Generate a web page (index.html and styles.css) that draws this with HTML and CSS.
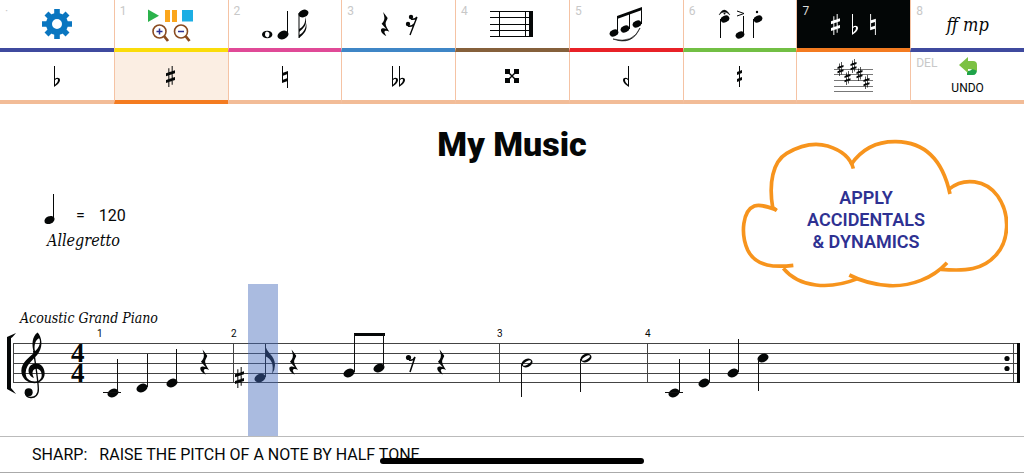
FILE: index.html
```html
<!DOCTYPE html>
<html lang="en">
<head>
    <meta charset="UTF-8">
    <meta name="viewport" content="width=device-width, initial-scale=1.0">
    <title>My Music</title>
    <link rel="stylesheet" href="styles.css">
</head>
<body>

<!-- shared music symbols -->
<svg class="symbols" aria-hidden="true">
    <symbol id="head" viewBox="0 0 12 10"><ellipse cx="6" cy="5" rx="5.7" ry="4.1" transform="rotate(-24 6 5)" /></symbol>
    <symbol id="half" viewBox="0 0 12 10"><path fill-rule="evenodd" transform="rotate(-24 6 5)" d="M0.3 5a5.7 4.1 0 1 0 11.4 0a5.7 4.1 0 1 0 -11.4 0zM1.5 5.4a4.5 1.7 -6 1 0 9 -.8a4.5 1.7 -6 1 0 -9 .8z" /></symbol>
    <symbol id="sharp" viewBox="0 0 27 63"><path d="M7 7h3v56h-3zM17 0h3v56h-3zM0 22L27 13V22L0 31zM0 42L27 33V42L0 51z" /></symbol>
    <symbol id="flat" viewBox="0 0 18 63"><path fill-rule="evenodd" d="M0 0H3V38C8 33 18 34 18 42C18 51 8 57 0 63zM3 43V56C8 52 12 47 12 42C12 37 6 38 3 43z" /></symbol>
    <symbol id="natural" viewBox="0 0 18 66"><path d="M0 0H3V20L18 15V66H15V46L0 51zM3 29V41L15 37V25z" fill-rule="evenodd" /></symbol>
    <symbol id="rest" viewBox="0 0 28 78"><path d="M8 0L22 19C24 22 16 31 16 38C16 46 22 53 28 64C20 59 11 60 12 66C13 70 16 74 18 78C8 74 0 66 1 58C2 52 11 52 18 55L3 38C11 30 14 22 11 12z" /></symbol>
    <symbol id="clef" viewBox="0 0 72 200">
        <path fill-rule="evenodd" d="M39 62C31 40 33 12 50 1C63 16 65 40 55 58C48 76 15 92 14 122C14 140 26 148 42 148C56 148 63 138 62 127C61 114 52 110 46 110C36 110 30 122 39 137C18 132 15 96 44 94C61 93 71 108 71 124C71 142 56 153 40 153C18 153 1 138 1 116C1 90 26 76 39 62zM42 57C55 46 61 28 54 18C44 22 38 38 42 57z" />
        <path d="M38 56C42 90 51 140 52 170C53 188 42 197 29 196C20 195 14 190 13 182" fill="none" stroke="currentColor" stroke-width="4" />
        <circle cx="23" cy="180" r="12" />
    </symbol>
</svg>

<nav class="toolbar">
    <button class="tool settings" aria-label="Settings">
        <span class="key">·</span>
        <svg class="icon" viewBox="0 0 112 48">
            <circle cx="56" cy="24" r="8" fill="none" stroke="#0a76c0" stroke-width="6" />
            <path d="M56 9V15M56 33V39M41 24H47M65 24H71M45.5 13.5L50 18M62 30L66.5 34.5M66.5 13.5L62 18M50 30L45.5 34.5" fill="none" stroke="#0a76c0" stroke-width="5.6" />
        </svg>
    </button>
    <button class="tool playback" aria-label="Playback and zoom">
        <span class="key">1</span>
        <svg class="icon" viewBox="0 0 112 48">
            <path d="M33 9.5V22L44 15.8z" fill="#2bb24c" />
            <path d="M50 10h5v12h-5zM57 10h5v12h-5z" fill="#fba61c" />
            <path d="M67 10h11v11.5h-11z" fill="#1caee4" />
            <g fill="none" stroke="#8a4b20">
                <circle cx="44.5" cy="31.5" r="6.5" stroke-width="1.6" />
                <circle cx="66" cy="31.5" r="6.5" stroke-width="1.6" />
                <path d="M49 36L53 41M70.5 36L74.5 41" stroke-width="2.8" />
            </g>
            <path d="M41.5 31.5h6M44.5 28.5v6M63 31.5h6" stroke="#2e3192" stroke-width="1.5" />
        </svg>
    </button>
    <button class="tool notes" aria-label="Notes">
        <span class="key">2</span>
        <svg class="icon" viewBox="0 0 112 48">
            <path fill-rule="evenodd" d="M33 34.5a5.2 3.8 0 1 0 10.4 0a5.2 3.8 0 1 0 -10.4 0zM36 34a2.2 2.8 0 1 1 4.4 1a2.2 2.8 0 1 1 -4.4 -1z" />
            <use href="#head" x="48" y="30" width="12" height="10" /><path d="M58 11h1v22h-1z" />
            <use href="#head" x="69" y="9" width="11" height="9" /><path d="M69.5 13h1v25h-1z" />
            <path d="M70 29C74 27 77 23 76 17C79 24 75 28 70 32zM70 35C74 33 77 29 77 23C79 30 75 34 70 38z" />
        </svg>
    </button>
    <button class="tool rests" aria-label="Rests">
        <span class="key">3</span>
        <svg class="icon" viewBox="0 0 112 48">
            <use href="#rest" x="37" y="12" width="10" height="24" />
            <circle cx="68" cy="17" r="2.2" /><circle cx="65" cy="24" r="2.2" />
            <path d="M74 17L67 35M68 19Q72 20 74 17M65 26Q69 27 71 24" fill="none" stroke="currentColor" stroke-width="1.4" />
        </svg>
    </button>
    <button class="tool staves" aria-label="Staves and bar lines">
        <span class="key">4</span>
        <svg class="icon" viewBox="0 0 112 48">
            <path d="M34 11h43v1h-43zM34 17h43v1h-43zM34 24h43v1h-43zM34 30h43v1h-43zM34 36h43v1h-43zM43 11h1v26h-1zM69 11h1v26h-1zM73 11h4v26h-4z" />
        </svg>
    </button>
    <button class="tool groups" aria-label="Beams and slurs">
        <span class="key">5</span>
        <svg class="icon" viewBox="0 0 112 48">
            <use href="#head" x="39" y="29" width="10" height="8" /><use href="#head" x="50" y="25" width="10" height="8" /><use href="#head" x="62" y="20" width="10" height="8" />
            <path d="M47 16h1v17h-1zM59 12h1v17h-1zM71 8h1v16h-1zM47 16L72 7V10L47 19z" />
            <path d="M43 39Q62 46 70 28Q63 44 43 39z" stroke="currentColor" stroke-width=".6" />
        </svg>
    </button>
    <button class="tool marks" aria-label="Articulations">
        <span class="key">6</span>
        <svg class="icon" viewBox="0 0 112 48">
            <use href="#head" x="36" y="15" width="10" height="8" /><path d="M36 19h1v19h-1z" />
            <use href="#head" x="51" y="31" width="10" height="8" /><path d="M59 16h1v19h-1z" />
            <use href="#head" x="69" y="15" width="10" height="8" /><path d="M69 19h1v19h-1z" />
            <path d="M35 15Q40 5 46 15Q40 9 35 15z" stroke="currentColor" stroke-width=".4" /><circle cx="40.5" cy="13.5" r="1" /><circle cx="73" cy="12" r="1.2" />
            <path d="M53 11L60 13.5L53 16" fill="none" stroke="currentColor" />
        </svg>
    </button>
    <button class="tool accidentals" aria-label="Accidentals">
        <span class="key">7</span>
        <svg class="icon" viewBox="0 0 112 48">
            <use href="#sharp" x="33" y="14" width="9" height="21" />
            <use href="#flat" x="54" y="14" width="6" height="21" />
            <use href="#natural" x="72" y="14" width="6" height="21" />
        </svg>
    </button>
    <button class="tool dynamics">
        <span class="key">8</span>
        <span class="marking">ff mp</span>
    </button>

    <button class="tool" aria-label="Flat">
        <svg class="icon" viewBox="0 0 112 48"><use href="#flat" x="53" y="14" width="6" height="21" /></svg>
    </button>
    <button class="tool selected" aria-label="Sharp">
        <svg class="icon" viewBox="0 0 112 48"><use href="#sharp" x="51" y="14" width="9" height="21" /></svg>
    </button>
    <button class="tool" aria-label="Natural">
        <svg class="icon" viewBox="0 0 112 48"><use href="#natural" x="53" y="14" width="6" height="22" /></svg>
    </button>
    <button class="tool" aria-label="Double flat">
        <svg class="icon" viewBox="0 0 112 48"><use href="#flat" x="49" y="14" width="6" height="21" /><use href="#flat" x="56" y="14" width="6" height="21" /></svg>
    </button>
    <button class="tool" aria-label="Double sharp">
        <svg class="icon" viewBox="0 0 112 48">
            <path d="M49 17h5v5h-5zM58 17h5v5h-5zM49 26h5v5h-5zM58 26h5v5h-5z" />
            <path d="M52 20L60 28M60 20L52 28" stroke="currentColor" stroke-width="1.4" />
        </svg>
    </button>
    <button class="tool" aria-label="Half flat">
        <svg class="icon" viewBox="0 0 112 48"><use href="#flat" x="53" y="14" width="6" height="21" transform="matrix(-1 0 0 1 112 0)" /></svg>
    </button>
    <button class="tool" aria-label="Half sharp">
        <svg class="icon" viewBox="0 0 112 48"><path d="M55 14h1v21h-1zM53 20L58 18V21L53 23zM53 27L58 25V28L53 30z" /></svg>
    </button>
    <button class="tool" aria-label="Key signature">
        <svg class="icon" viewBox="0 0 112 48">
            <path d="M36 17h39v1h-39zM36 22h39v1h-39zM36 28h39v1h-39zM36 34h39v1h-39zM36 39h39v1h-39z" fill="#777" />
            <use href="#sharp" x="39" y="10" width="7" height="14" /><use href="#sharp" x="46" y="19" width="7" height="14" /><use href="#sharp" x="52" y="7" width="7" height="14" /><use href="#sharp" x="58" y="15" width="7" height="14" /><use href="#sharp" x="65" y="23" width="7" height="14" />
        </svg>
    </button>
    <button class="tool undo">
        <span class="key">DEL</span>
        <svg class="arrow" viewBox="0 0 18 18">
            <path d="M8 18H14Q18 18 18 12L13 10Q14 14 8 14z" fill="#1fa34a" />
            <path d="M0 8L9 0V4H14Q18 4 18 8V14Q16 12 9 12V16z" fill="#7cc142" />
        </svg>
        UNDO
    </button>
</nav>

<main>
    <header class="heading">
        <div class="tempo">
            <div class="beat">
                <svg class="beat-note" viewBox="0 0 12 31"><use href="#head" x="0" y="21" width="11" height="10" /><path d="M9 0h1v25h-1z" /></svg>
                <span>=</span>
                <span>120</span>
            </div>
            <div class="tempo-name">Allegretto</div>
        </div>
        <h1>My Music</h1>
        <div class="cloud">
            <svg class="cloud-shape" viewBox="62 57 804 450" aria-hidden="true">
                <g fill="none" stroke="#f7941d" stroke-width="11" stroke-linejoin="round">
                    <path d="M172 272L160 262C148 190 160 125 202 100C250 72 290 68 325 78C370 92 395 118 402 146" />
                    <path d="M395 134C430 83 480 64 530 65C610 66 668 110 692 222" />
                    <path d="M688 208C735 170 800 180 835 228C875 285 868 365 830 405C790 450 740 454 665 448" />
                    <path d="M683 428C640 475 575 500 510 497C460 494 415 478 390 465" />
                    <path d="M415 476C330 510 240 503 192 445" />
                    <path d="M222 436C170 442 110 442 85 390C63 340 70 272 105 258C125 252 150 262 172 270" />
                </g>
            </svg>
            <p>APPLY<br>ACCIDENTALS<br>&amp; DYNAMICS</p>
        </div>
    </header>

    <svg class="score" viewBox="0 0 1024 152" role="img" aria-label="Acoustic Grand Piano">
        <text class="instrument" x="20" y="39">Acoustic Grand Piano</text>
        <g class="bar-number">
            <text x="97" y="53">1</text><text x="231" y="53">2</text><text x="497" y="53">3</text><text x="645" y="53">4</text>
        </g>

        <!-- staff -->
        <path class="line" d="M13 59.5H1020M13 69.5H1020M13 79.5H1020M13 89.5H1020M13 98.5H1020M13.5 59V99M233.5 59V99M499.5 59V99M647.5 59V99M1013.5 59V99" />
        <path d="M16 49Q12 54 11 54V104Q12 105 16 110L7 105V53z" />
        <path d="M1017 59h3v40h-3z" />
        <circle cx="1007" cy="74.5" r="2.6" /><circle cx="1007" cy="84.5" r="2.6" />
        <use href="#clef" x="21" y="48" width="24" height="67" />
        <text class="meter" x="71" y="78">4</text><text class="meter" x="71" y="98">4</text>

        <!-- bar 1 -->
        <use href="#head" x="107" y="104" width="12" height="10" /><use href="#head" x="136" y="99" width="12" height="10" /><use href="#head" x="166" y="94" width="12" height="10" />
        <path class="stem" d="M117.5 75V108M147.5 70V103M176.5 65V98M103 108.5H121" />
        <use href="#rest" x="200" y="65" width="9" height="26" />

        <!-- bar 2 -->
        <use href="#sharp" x="235" y="83" width="9" height="21" />
        <use href="#head" x="254" y="89" width="12" height="10" />
        <path d="M265 60C266 69 275 71 275 81Q275 86 272 90Q275 76 265 72z" />
        <use href="#rest" x="289" y="65" width="9" height="26" />
        <use href="#head" x="343" y="84" width="12" height="10" /><use href="#head" x="373" y="79" width="12" height="10" />
        <path d="M354 49h31v3h-31z" />
        <circle cx="408.5" cy="73.5" r="2.6" />
        <path d="M409 76Q413 77 415 73L410 88" fill="none" stroke="currentColor" stroke-width="1.5" />
        <use href="#rest" x="437" y="65" width="9" height="26" />
        <path class="stem" d="M265.5 60V93M354.5 50V88M383.5 50V83" />

        <!-- bar 3 -->
        <use href="#half" x="521" y="74" width="12" height="10" /><use href="#half" x="580" y="69" width="12" height="10" />
        <path class="stem" d="M521.5 80V113M580.5 75V108" />

        <!-- bar 4 -->
        <use href="#head" x="668" y="104" width="12" height="10" /><use href="#head" x="698" y="94" width="12" height="10" /><use href="#head" x="727" y="84" width="12" height="10" /><use href="#head" x="757" y="69" width="12" height="10" />
        <path class="stem" d="M679.5 75V108M709.5 65V98M738.5 55V88M758.5 75V107M665 108.5H683" />

        <rect class="cursor" x="248" y="0" width="30" height="152" />
    </svg>
</main>

<footer class="hint">
    <span>SHARP:</span>
    <span>RAISE THE PITCH OF A NOTE BY HALF TONE</span>
    <div class="home-bar"></div>
</footer>

</body>
</html>
```
FILE: styles.css
```css
*, *:before, *:after {
    box-sizing: border-box;
}

body {
    margin: 0;
    font-family: Roboto, Arial, sans-serif;
    color: #050707;
    background-color: #fff;
}

svg {
    fill: currentColor;
}

.symbols {
    display: none;
}

/* toolbar */
.toolbar {
    display: grid;
    grid-template-columns: repeat(9, 1fr);
}

.tool {
    position: relative;
    display: flex;
    flex-direction: column;
    align-items: center;
    justify-content: center;
    height: 52px;
    padding: 0;
    border: 0;
    border-left: 1px solid #f5c3a4;
    border-bottom: 4px solid #f2bc97;
    background-color: #fff;
    color: #050707;
    font-family: inherit;
    font-size: 12px;
    cursor: pointer;
}

.tool:nth-child(9n + 1) {
    border-left: 0;
}

.icon {
    display: block;
    width: 112px;
    height: 48px;
}

.key {
    position: absolute;
    top: 4px;
    left: 5px;
    color: #c8c8c8;
    font-size: 12px;
    line-height: 14px;
}

.settings { border-bottom-color: #3f4a9e; }
.playback { border-bottom-color: #fadc0a; }
.notes { border-bottom-color: #e04a97; }
.rests { border-bottom-color: #3f86c6; }
.staves { border-bottom-color: #85603b; }
.groups { border-bottom-color: #e82127; }
.marks { border-bottom-color: #72bf44; }
.dynamics { border-bottom-color: #3f4a9e; }

.accidentals {
    background-color: #030606;
    border-bottom-color: #f47b20;
    color: #fff;
}

.accidentals .key {
    color: #ddd;
}

.selected {
    background-color: #fbeee3;
    border-bottom-color: #f47b20;
}

.marking {
    font-family: "DejaVu Serif Condensed", "DejaVu Serif", serif;
    font-size: 18px;
    font-style: italic;
}

.undo {
    gap: 6px;
    line-height: 14px;
}

.arrow {
    width: 18px;
    height: 18px;
}

/* title row */
.heading {
    display: grid;
    grid-template-columns: 1fr auto 1fr;
    padding: 35px 16px 0 44px;
    margin-bottom: -5px;
}

h1 {
    margin: -16px 0 0 -28px;
    font-size: 34px;
    font-weight: 900;
    line-height: 42px;
}

.tempo {
    padding-top: 55px;
}

.beat {
    display: flex;
    align-items: flex-end;
    gap: 14px;
    font-size: 16px;
    line-height: 18px;
}

.beat-note {
    width: 12px;
    height: 31px;
    margin-right: 6px;
}

.tempo-name, .instrument {
    font-family: "DejaVu Serif Condensed", "DejaVu Serif", serif;
    font-style: italic;
}

.tempo-name {
    padding: 6px 3px;
    font-size: 16px;
    line-height: 20px;
}

.cloud {
    display: grid;
    justify-self: end;
    align-items: center;
}

.cloud-shape, .cloud p {
    grid-area: 1 / 1;
}

.cloud-shape {
    width: 268px;
    height: 150px;
}

.cloud p {
    margin: 0;
    padding: 12px 16px 0 0;
    color: #2e3192;
    font-size: 18px;
    font-weight: 600;
    line-height: 22px;
    text-align: center;
}

/* score */
.score {
    display: block;
    width: 100%;
}

.instrument {
    font-size: 14px;
}

.bar-number {
    font-size: 10px;
}

.meter {
    font-family: "Liberation Serif", "Times New Roman", serif;
    font-size: 27px;
    font-weight: bold;
}

.line, .stem {
    fill: none;
    stroke: #444;
    stroke-width: 1;
}

.stem {
    stroke: #111;
}

.cursor {
    fill: rgba(67, 105, 186, .45);
}

/* footer */
.hint {
    position: relative;
    display: flex;
    gap: 12px;
    padding: 8px 32px 7px;
    border-top: 1px solid #bbb;
    border-bottom: 1px solid #aaa;
    font-size: 16px;
    line-height: 20px;
}

.home-bar {
    position: absolute;
    left: 50%;
    bottom: 8px;
    width: 264px;
    height: 6px;
    margin-left: -132px;
    border-radius: 3px;
    background-color: #000;
}
```
